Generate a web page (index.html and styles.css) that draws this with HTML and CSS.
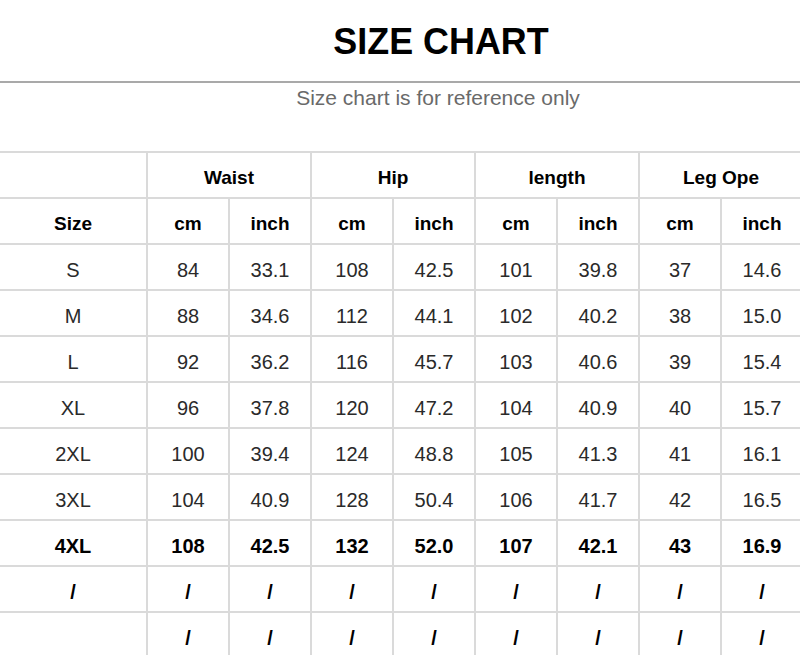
FILE: index.html
```html
<!DOCTYPE html>
<html>
<head>
<meta charset="utf-8">
<link rel="stylesheet" href="styles.css">
</head>
<body>
<header class="head">
  <h1 class="title"><span>SIZE CHART</span></h1>
</header>
<p class="note">Size chart is for reference only</p>
<div class="chart">
  <div class="cell hd"></div>
  <div class="cell hd span2">Waist</div>
  <div class="cell hd span2">Hip</div>
  <div class="cell hd span2">length</div>
  <div class="cell hd span2">Leg Ope</div>

  <div class="cell hd">Size</div>
  <div class="cell hd">cm</div><div class="cell hd">inch</div>
  <div class="cell hd">cm</div><div class="cell hd">inch</div>
  <div class="cell hd">cm</div><div class="cell hd">inch</div>
  <div class="cell hd">cm</div><div class="cell hd">inch</div>

  <div class="cell">S</div><div class="cell">84</div><div class="cell">33.1</div><div class="cell">108</div><div class="cell">42.5</div><div class="cell">101</div><div class="cell">39.8</div><div class="cell">37</div><div class="cell">14.6</div>
  <div class="cell">M</div><div class="cell">88</div><div class="cell">34.6</div><div class="cell">112</div><div class="cell">44.1</div><div class="cell">102</div><div class="cell">40.2</div><div class="cell">38</div><div class="cell">15.0</div>
  <div class="cell">L</div><div class="cell">92</div><div class="cell">36.2</div><div class="cell">116</div><div class="cell">45.7</div><div class="cell">103</div><div class="cell">40.6</div><div class="cell">39</div><div class="cell">15.4</div>
  <div class="cell">XL</div><div class="cell">96</div><div class="cell">37.8</div><div class="cell">120</div><div class="cell">47.2</div><div class="cell">104</div><div class="cell">40.9</div><div class="cell">40</div><div class="cell">15.7</div>
  <div class="cell">2XL</div><div class="cell">100</div><div class="cell">39.4</div><div class="cell">124</div><div class="cell">48.8</div><div class="cell">105</div><div class="cell">41.3</div><div class="cell">41</div><div class="cell">16.1</div>
  <div class="cell">3XL</div><div class="cell">104</div><div class="cell">40.9</div><div class="cell">128</div><div class="cell">50.4</div><div class="cell">106</div><div class="cell">41.7</div><div class="cell">42</div><div class="cell">16.5</div>
  <div class="cell b">4XL</div><div class="cell b">108</div><div class="cell b">42.5</div><div class="cell b">132</div><div class="cell b">52.0</div><div class="cell b">107</div><div class="cell b">42.1</div><div class="cell b">43</div><div class="cell b">16.9</div>
  <div class="cell b">/</div><div class="cell b">/</div><div class="cell b">/</div><div class="cell b">/</div><div class="cell b">/</div><div class="cell b">/</div><div class="cell b">/</div><div class="cell b">/</div><div class="cell b">/</div>
  <div class="cell b"></div><div class="cell b">/</div><div class="cell b">/</div><div class="cell b">/</div><div class="cell b">/</div><div class="cell b">/</div><div class="cell b">/</div><div class="cell b">/</div><div class="cell b">/</div>
</div>
</body>
</html>
```

FILE: styles.css
```css
html, body {
  margin: 0;
  padding: 0;
  background: #fff;
  overflow: hidden;
  width: 800px;
  height: 655px;
}
body {
  font-family: "Liberation Sans", Arial, sans-serif;
}
.head {
  border-bottom: 2px solid #a9a9a9;
  display: flex;
  align-items: center;
  justify-content: center;
  padding-left: 82px;
  box-sizing: border-box;
  height: 83px;
}
.title {
  margin: 0;
  padding-top: 2px;
  font-size: 37px;
  font-weight: bold;
  color: #000;
  line-height: 1;
}
.title span {
  display: inline-block;
  transform: scaleX(0.97);
}
.note {
  margin: 0 0 38px 0;
  padding-left: 76px;
  text-align: center;
  font-size: 21px;
  line-height: 30px;
  color: #6a6a6a;
}
.chart {
  display: grid;
  grid-template-columns: 146px repeat(8, 80px);
  grid-auto-rows: 44px;
  gap: 2px;
  padding-top: 2px;
  background: #dadada;
  width: 812px;
}
.cell {
  background: #fff;
  display: flex;
  align-items: center;
  justify-content: center;
  font-size: 20px;
  color: #2a2a2a;
  padding-top: 6px;
  box-sizing: border-box;
}
.hd {
  font-weight: bold;
  color: #000;
  font-size: 19px;
  padding-top: 5px;
}
.b {
  font-weight: bold;
  color: #000;
}
.span2 {
  grid-column: span 2;
}
```
